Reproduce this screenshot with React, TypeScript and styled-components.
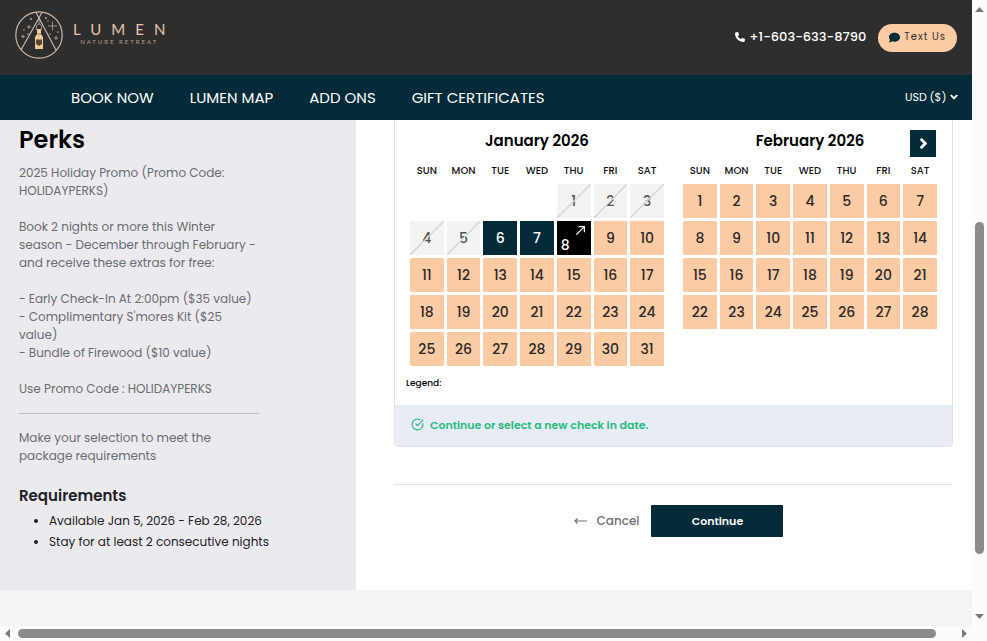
import React from "react";
import styled, { createGlobalStyle, css } from "styled-components";
import { FaPhone, FaComment } from "react-icons/fa6";
import { FaChevronDown, FaChevronRight } from "react-icons/fa";
import { CircleCheckBig } from "lucide-react";

const navy = "#032b39";
const peach = "#fbcba4";

const GlobalStyle = createGlobalStyle`
  *, *::before, *::after { box-sizing: border-box; }
  body {
    margin: 0;
    background: #fff;
    color: #1f2226;
    font-family: Poppins, Inter, sans-serif;
    font-size: 12px;
    line-height: 18px;
  }
  button, select { font: inherit; color: inherit; border: 0; padding: 0; background: none; cursor: pointer; }
  a { color: inherit; text-decoration: none; }
`;

const Shell = styled.div`
  display: grid;
  grid-template-columns: minmax(0, 1fr) 15px;
  grid-template-rows: 1fr 15px;
  min-height: 100vh;
`;

const Page = styled.div`
  display: flex;
  flex-direction: column;
  background: #f4f4f5;
`;

const Header = styled.header`
  display: flex;
  align-items: center;
  justify-content: space-between;
  padding: 0 15px 0 14px;
  min-height: 75px;
  background: #2f2e2f;
  color: #fff;
`;

const Brand = styled.a`
  display: flex;
  align-items: center;
  gap: 9px;
  padding-bottom: 6px;
`;

const BrandText = styled.span`
  display: flex;
  flex-direction: column;
  align-items: center;
  padding-bottom: 4px;
  font-family: Lato, sans-serif;
  color: #e3c5ab;
`;

const BrandName = styled.span`
  font-size: 15px;
  line-height: 18px;
  letter-spacing: 10px;
  margin-right: -10px;
`;

const BrandTag = styled.span`
  font-size: 6px;
  line-height: 8px;
  letter-spacing: 2px;
  color: #b59c88;
`;

const Contact = styled.div`
  display: flex;
  align-items: center;
  gap: 12px;
`;

const Phone = styled.a`
  display: flex;
  align-items: center;
  gap: 4px;
  padding-bottom: 2px;
  font-size: 13px;
  font-weight: 500;
`;

const TextUs = styled.a`
  display: flex;
  align-items: center;
  gap: 4px;
  height: 28px;
  margin-top: 1px;
  padding: 0 11px 2px;
  border-radius: 14px;
  background: #fdcba2;
  color: #333;
  font-size: 10px;
  letter-spacing: 1px;

  svg { color: ${navy}; }
`;

const NavBar = styled.nav`
  display: flex;
  align-items: center;
  gap: 36px;
  min-height: 45px;
  padding: 0 14px 0 71px;
  background: ${navy};
  color: #fff;
`;

const NavLink = styled.a`
  font-size: 15px;
  line-height: 22px;
`;

const Currency = styled.label`
  display: flex;
  align-items: center;
  gap: 3px;
  margin-left: auto;
  padding-bottom: 2px;
  font-size: 11px;
  color: #fff;

  select { appearance: none; outline: 0; }
  option { color: #000; }
  svg { stroke: currentColor; stroke-width: 50px; overflow: visible; }
`;

const Columns = styled.div`
  display: grid;
  grid-template-columns: 89fr 154fr;
`;

const Sidebar = styled.aside`
  padding: 5px 19px 38px;
  background: #ebebef;
`;

const Title = styled.h1`
  margin: 0 0 9px;
  font-size: 24px;
  line-height: 30px;
  font-weight: 600;
  color: #000;
`;

const Copy = styled.p`
  margin: 0;
  color: #6b6c72;
  white-space: pre-line;
`;

const Rule = styled.hr`
  width: 240px;
  max-width: 100%;
  margin: 15px 0;
  border: 0;
  border-top: 1px solid #bdbcc2;
`;

const Subtitle = styled.h2`
  margin: 20px 0 3px;
  font-size: 15px;
  line-height: 22px;
  font-weight: 600;
`;

const Requirements = styled.ul`
  margin: 0;
  padding-left: 30px;
  line-height: 21px;
`;

const Main = styled.main`
  padding: 0 19px 0 38px;
  background: #fff;
`;

const Card = styled.section`
  border: 1px solid #dfe3ea;
  border-top: 0;
  border-radius: 0 0 4px 4px;
  overflow: hidden;
`;

const Months = styled.div`
  display: grid;
  grid-template-columns: 1fr 1fr;
  align-items: start;
  gap: 13px;
  padding: 10px 12px 0;
`;

const MonthPanel = styled.section`
  position: relative;
`;

const MonthName = styled.h3`
  margin: 0;
  font-size: 15px;
  line-height: 22px;
  font-weight: 600;
  text-align: center;
  color: #000;
`;

const NextButton = styled.button`
  position: absolute;
  top: 0;
  right: 4px;
  display: grid;
  place-items: center;
  width: 26px;
  height: 27px;
  background: ${navy};
  color: #fff;

  svg { stroke: currentColor; stroke-width: 50px; overflow: visible; }
`;

const Grid = styled.table`
  width: 100%;
  margin-top: 4px;
  border-spacing: 3px;
  table-layout: fixed;

  th {
    height: 22px;
    padding: 2px 0 0;
    font-size: 10px;
    line-height: 20px;
    font-weight: 500;
    color: #111;
  }
  td { height: 34px; padding: 0; }
`;

type DayKind = "open" | "closed" | "stay" | "checkout";

const dayLook = {
  open: css`
    background: ${peach};
    color: #2e2a27;
  `,
  closed: css`
    background: #f3f3f3;
    color: #555;
    &::after {
      content: "";
      position: absolute;
      inset: 0;
      background: linear-gradient(to bottom right, transparent 48%, #d5d5d5 49%, #d5d5d5 51%, transparent 52%);
    }
  `,
  stay: css`
    background: ${navy};
    color: #fff;
  `,
  checkout: css`
    background: #000;
    color: #fff;
    align-items: flex-end;
    justify-content: flex-start;
    padding: 0 4px 1px;
    svg { position: absolute; top: 4px; right: 5px; }
  `,
};

const Day = styled.button<{ $kind: DayKind }>`
  position: relative;
  display: flex;
  align-items: center;
  justify-content: center;
  width: 100%;
  height: 34px;
  font-size: 14px;
  font-weight: 500;
  ${({ $kind }) => dayLook[$kind]}
`;

const Legend = styled.p`
  margin: 5px 0 0;
  padding: 0 11px 13px;
  font-size: 9px;
  font-weight: 500;
  color: #000;
`;

const Notice = styled.div`
  display: flex;
  align-items: center;
  gap: 6px;
  min-height: 41px;
  padding: 0 16px 2px;
  background: #e8edf5;
  color: #25bb7c;
  font-size: 11px;
  font-weight: 600;
`;

const Actions = styled.div`
  display: flex;
  justify-content: center;
  align-items: center;
  gap: 12px;
  margin-top: 37px;
  padding: 20px 0 53px 10px;
  border-top: 1px solid #e4e4e6;
`;

const Cancel = styled.button`
  display: flex;
  align-items: center;
  gap: 10px;
  color: #707070;
  font-weight: 500;
`;

const Continue = styled.button`
  width: 132px;
  height: 32px;
  border-radius: 1px;
  background: ${navy};
  color: #fff;
  font-size: 11px;
  font-weight: 600;
`;

const Bar = styled.div<{ $vertical?: boolean }>`
  display: flex;
  flex-direction: ${({ $vertical }) => ($vertical ? "column" : "row")};
  align-items: center;
  background: #fcfcfc;
  color: #8b8b8b;
  ${({ $vertical }) => $vertical && "padding: 2px 0;"}
`;

const BarArrow = styled.button`
  display: grid;
  place-items: center;
  flex: 0 0 auto;
  width: 15px;
  height: 15px;
  color: #7b7b7b;
`;

const Space = styled.span<{ $share: number }>`
  flex: ${({ $share }) => $share} 1 0;
`;

const Thumb = styled(Space)<{ $vertical?: boolean }>`
  ${({ $vertical }) => ($vertical ? "width: 9px;" : "height: 9px;")}
  border-radius: 5px;
  background: #8b8b8b;
`;

const Corner = styled.div`
  background: #fcfcfc;
`;

function TentLogo() {
  return (
    <svg width="50" height="50" viewBox="0 0 50 50" fill="none" stroke="#cbb7a7" strokeWidth="1.2" aria-hidden="true">
      <circle cx="25" cy="25" r="23.2" />
      <path d="M22 2.5 42 40M28 2.5 7 40" />
      <path d="M22.5 20v-3c0-2 1-3 2.5-3s2.5 1 2.5 3v3M25 7v7" strokeWidth=".7" />
      <path d="M23 19h4v5l2 3v12h-8V27l2-3z" fill="#ecc99d" stroke="none" />
      <path d="M22 29.500h6v4.500l-3 2-3-2z" fill="#5a4632" stroke="none" />
      <path d="M23 24h4" stroke="#7b6248" strokeWidth=".8" />
      <path d="M38.500 11.500v9M34 16h9M7 26.500h4M9 24.500v4M13 17h4M15 15v4M40 28h4M42 26v4" strokeWidth=".7" />
      <g fill="#cbb7a7" stroke="none">
        <circle cx="17" cy="9" r=".9" />
        <circle cx="32" cy="8" r=".9" />
        <circle cx="34" cy="11" r=".7" />
        <circle cx="10" cy="20" r=".7" />
        <circle cx="14" cy="24" r=".8" />
        <circle cx="36" cy="24" r=".7" />
        <circle cx="44" cy="22" r=".8" />
      </g>
    </svg>
  );
}

const arrowRotation = { up: 0, right: 90, down: 180, left: 270 };

function ScrollArrow({ to }: { to: keyof typeof arrowRotation }) {
  return (
    <BarArrow type="button" aria-label={`Scroll ${to}`}>
      <svg width="9" height="9" viewBox="0 0 9 9" fill="currentColor">
        <path d="M4.5 2 9 7H0z" transform={`rotate(${arrowRotation[to]} 4.5 4.5)`} />
      </svg>
    </BarArrow>
  );
}

const weekdays = ["SUN", "MON", "TUE", "WED", "THU", "FRI", "SAT"];

interface MonthProps {
  name: string;
  firstWeekday: number;
  days: number;
  kindOf?: (day: number) => DayKind;
  children?: React.ReactNode;
}

function Month({ name, firstWeekday, days, kindOf = () => "open", children }: MonthProps) {
  const weeks = Array.from({ length: Math.ceil((firstWeekday + days) / 7) }, (_, week) =>
    weekdays.map((_, i) => week * 7 + i - firstWeekday + 1)
  );
  return (
    <MonthPanel>
      <MonthName>{name}</MonthName>
      {children}
      <Grid aria-label={name}>
        <thead>
          <tr>{weekdays.map((d) => <th key={d} scope="col">{d}</th>)}</tr>
        </thead>
        <tbody>
          {weeks.map((week, w) => (
            <tr key={w}>
              {week.map((day) => {
                if (day < 1 || day > days) return <td key={day} />;
                const kind = kindOf(day);
                return (
                  <td key={day}>
                    <Day type="button" $kind={kind} disabled={kind === "closed"}>
                      {day}
                      {kind === "checkout" && (
                        <svg width="11" height="11" viewBox="0 0 12 12" fill="none" stroke="currentColor" strokeWidth="1.3">
                          <path d="M1.5 10.5 10 2M4 1.8h6.2V8" />
                        </svg>
                      )}
                    </Day>
                  </td>
                );
              })}
            </tr>
          ))}
        </tbody>
      </Grid>
    </MonthPanel>
  );
}

const januaryKind = (day: number): DayKind =>
  day <= 5 ? "closed" : day <= 7 ? "stay" : day === 8 ? "checkout" : "open";

const perks = `2025 Holiday Promo (Promo Code:
HOLIDAYPERKS)

Book 2 nights or more this Winter
season - December through February -
and receive these extras for free:

- Early Check-In At 2:00pm ($35 value)
- Complimentary S'mores Kit ($25
value)
- Bundle of Firewood ($10 value)

Use Promo Code : HOLIDAYPERKS`;

export default function App() {
  return (
    <>
      <GlobalStyle />
      <Shell>
        <Page>
          <Header>
            <Brand href="#home">
              <TentLogo />
              <BrandText>
                <BrandName>LUMEN</BrandName>
                <BrandTag>NATURE RETREAT</BrandTag>
              </BrandText>
            </Brand>
            <Contact>
              <Phone href="tel:+16036338790">
                <FaPhone size={10} />
                +1-603-633-8790
              </Phone>
              <TextUs href="sms:+16036338790">
                <FaComment size={11} />
                Text Us
              </TextUs>
            </Contact>
          </Header>
          <NavBar>
            <NavLink href="#book">BOOK NOW</NavLink>
            <NavLink href="#map">LUMEN MAP</NavLink>
            <NavLink href="#addons">ADD ONS</NavLink>
            <NavLink href="#gifts">GIFT CERTIFICATES</NavLink>
            <Currency>
              <select aria-label="Currency" defaultValue="usd">
                <option value="usd">USD ($)</option>
              </select>
              <FaChevronDown size={8} />
            </Currency>
          </NavBar>
          <Columns>
            <Sidebar>
              <Title>Perks</Title>
              <Copy>{perks}</Copy>
              <Rule />
              <Copy>{"Make your selection to meet the\npackage requirements"}</Copy>
              <Subtitle>Requirements</Subtitle>
              <Requirements>
                <li>Available Jan 5, 2026 - Feb 28, 2026</li>
                <li>Stay for at least 2 consecutive nights</li>
              </Requirements>
            </Sidebar>
            <Main>
              <Card>
                <Months>
                  <Month name="January 2026" firstWeekday={4} days={31} kindOf={januaryKind} />
                  <Month name="February 2026" firstWeekday={0} days={28}>
                    <NextButton type="button" aria-label="Next month">
                      <FaChevronRight size={11} />
                    </NextButton>
                  </Month>
                </Months>
                <Legend>Legend:</Legend>
                <Notice role="status">
                  <CircleCheckBig size={13} strokeWidth={2} />
                  Continue or select a new check in date.
                </Notice>
              </Card>
              <Actions>
                <Cancel type="button">
                  <svg width="13" height="8" viewBox="0 0 13 8" fill="none" stroke="currentColor" strokeWidth="1.1">
                    <path d="M13 4H1M3.5 1.5 1 4l2.5 2.5" />
                  </svg>
                  Cancel
                </Cancel>
                <Continue type="button">Continue</Continue>
              </Actions>
            </Main>
          </Columns>
        </Page>
        <Bar $vertical>
          <ScrollArrow to="up" />
          <Space $share={205} />
          <Thumb $vertical $share={332} />
          <Space $share={55} />
          <ScrollArrow to="down" />
        </Bar>
        <Bar>
          <ScrollArrow to="left" />
          <Space $share={3} />
          <Thumb $share={918} />
          <Space $share={21} />
          <ScrollArrow to="right" />
        </Bar>
        <Corner />
      </Shell>
    </>
  );
}
